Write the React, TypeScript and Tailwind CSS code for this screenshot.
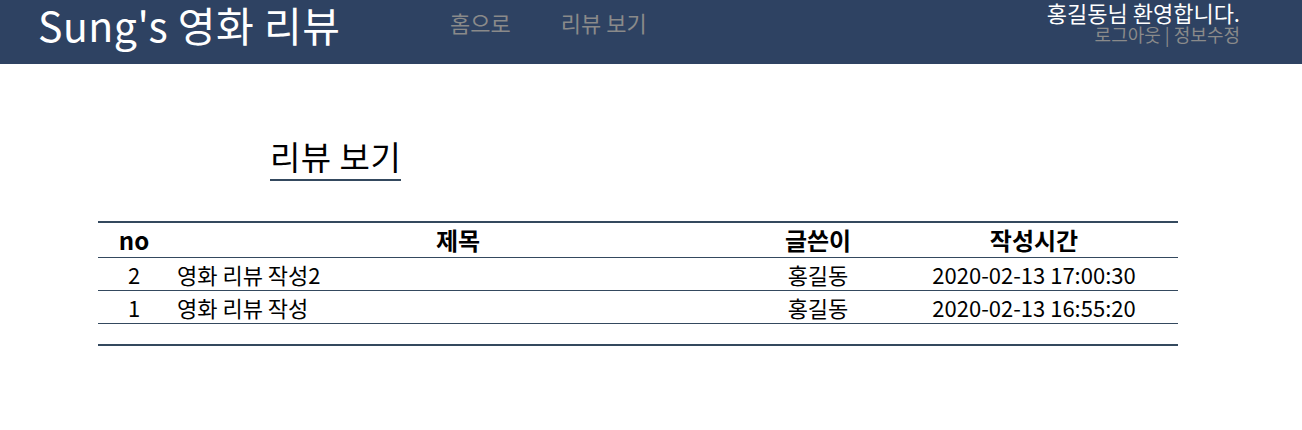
import React from 'react';

const reviews = [
  { no: 2, title: '영화 리뷰 작성2', writer: '홍길동', date: '2020-02-13 17:00:30' },
  { no: 1, title: '영화 리뷰 작성', writer: '홍길동', date: '2020-02-13 16:55:20' },
];

const font = { fontFamily: '"Noto Sans CJK KR", "Noto Sans", sans-serif' };

export default function App() {
  return (
    <div className="min-h-[430px] bg-white" style={font}>
      <header className="h-16 bg-[#2e4262] flex items-start">
        <h1 className="ml-[38px] w-[412px] shrink-0 text-[41px] leading-[48px] tracking-[0.5px] text-white whitespace-nowrap">
          Sung's 영화 리뷰
        </h1>
        <nav className="mt-[8px] flex gap-[50px] text-[22px] leading-[28px] text-[#8a8a8a] whitespace-nowrap">
          <a>홈으로</a>
          <a>리뷰 보기</a>
        </nav>
        <div className="ml-auto mr-[62px] flex flex-col items-end whitespace-nowrap">
          <p className="text-[22px] leading-[24px] text-white">홍길동님 환영합니다.</p>
          <p className="text-[18px] leading-[20px] text-[#8a8a8a]">로그아웃 | 정보수정</p>
        </div>
      </header>

      <main className="px-[98px]">
        <div className="mt-[70px] ml-[172px]">
          <h2 className="inline-block text-[33px] leading-[45px] tracking-[0.5px] text-black border-b-2 border-[#34495e]">리뷰 보기</h2>
        </div>

        <div className="mt-[40px] w-[1080px] border-t-2 border-b-2 border-[#34495e] pb-[20px]">
          <table className="w-full border-collapse text-black">
            <thead>
              <tr className="border-b border-[#34495e] h-[34px] text-[24px] leading-[28px]">
                <th className="w-[72px] font-bold">no</th>
                <th className="w-[576px] font-bold">제목</th>
                <th className="w-[144px] font-bold">글쓴이</th>
                <th className="font-bold">작성시간</th>
              </tr>
            </thead>
            <tbody>
              {reviews.map((r) => (
                <tr key={r.no} className="border-b border-[#34495e] h-[33px] text-[22px] leading-[26px]">
                  <td className="text-center">{r.no}</td>
                  <td className="pl-[7px]">{r.title}</td>
                  <td className="text-center">{r.writer}</td>
                  <td className="text-center">{r.date}</td>
                </tr>
              ))}
            </tbody>
          </table>
        </div>
      </main>
    </div>
  );
}
